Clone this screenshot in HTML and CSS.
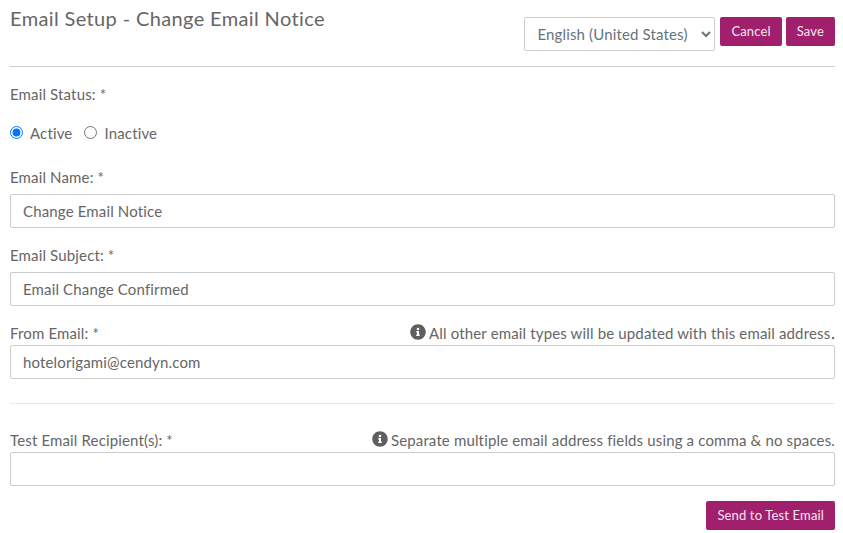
FILE: index.html
```html
<!DOCTYPE html>
<html lang="en">
<head>
  <meta charset="UTF-8" />
  <title>Email Setup</title>
  <link rel="stylesheet" href="styles.css">
</head>
<body>
  <div class="header">
    <h1>Email Setup - Change Email Notice</h1>
    <div class="actions">
      <select class="lang"><option>English (United States)</option></select>
      <button class="btn">Cancel</button>
      <button class="btn">Save</button>
    </div>
  </div>

  <div class="status">
    <label class="label">Email Status: *</label>
    <div class="radios">
      <input type="radio" name="status" id="active" checked>
      <label for="active">Active</label>
      <input type="radio" name="status" id="inactive">
      <label for="inactive">Inactive</label>
    </div>
  </div>

  <div class="field">
    <label class="label">Email Name: *</label>
    <input type="text" value="Change Email Notice">
  </div>

  <div class="field">
    <label class="label">Email Subject: *</label>
    <input type="text" value="Email Change Confirmed">
  </div>

  <div class="field from">
    <div class="label-row">
      <label class="label">From Email: *</label>
      <span class="hint">
        <svg viewBox="0 0 512 512"><path d="M256 8C119 8 8 119 8 256s111 248 248 248 248-111 248-248S393 8 256 8zm0 110a42 42 0 1 1 0 84 42 42 0 0 1 0-84zm56 254c0 7-5 12-12 12h-88c-7 0-12-5-12-12v-24c0-7 5-12 12-12h12v-64h-12c-7 0-12-5-12-12v-24c0-7 5-12 12-12h64c7 0 12 5 12 12v100h12c7 0 12 5 12 12v24z"/></svg>
        <span>All other email types will be updated with this email address<span class="dot">.</span></span>
      </span>
    </div>
    <input type="text" value="hotelorigami@cendyn.com">
  </div>

  <div class="divider"></div>

  <div class="field test">
    <div class="label-row">
      <label class="label">Test Email Recipient(s): *</label>
      <span class="hint">
        <svg viewBox="0 0 512 512"><path d="M256 8C119 8 8 119 8 256s111 248 248 248 248-111 248-248S393 8 256 8zm0 110a42 42 0 1 1 0 84 42 42 0 0 1 0-84zm56 254c0 7-5 12-12 12h-88c-7 0-12-5-12-12v-24c0-7 5-12 12-12h12v-64h-12c-7 0-12-5-12-12v-24c0-7 5-12 12-12h64c7 0 12 5 12 12v100h12c7 0 12 5 12 12v24z"/></svg>
        <span>Separate multiple email address fields using a comma &amp; no spaces.</span>
      </span>
    </div>
    <input type="text">
  </div>

  <div class="footer">
    <button class="btn">Send to Test Email</button>
  </div>
</body>
</html>
```

FILE: styles.css
```css
* {
  box-sizing: border-box;
}

body {
  font-family: Lato, "Noto Sans", sans-serif;
  font-size: 15px;
  letter-spacing: 0.15px;
  color: #666;
  background: #fff;
  margin: 0;
  padding: 0 8px 0 10px;
}

.header {
  display: flex;
  justify-content: space-between;
  height: 67px;
  border-bottom: 1px solid #ccc;
}

.header h1 {
  margin: 5px 0 0;
  font-size: 20px;
  line-height: 27px;
  font-weight: 400;
  letter-spacing: 0.37px;
}

.actions {
  display: flex;
  align-items: flex-start;
  gap: 4px;
  padding-top: 17px;
}

.lang {
  width: 191px;
  height: 34px;
  margin-right: 1px;
  padding: 0 8px;
  font-family: inherit;
  font-size: 15px;
  letter-spacing: 0.15px;
  color: #68737c;
  background: #fff;
  border: 1px solid #ccc;
  border-radius: 2px;
}

.btn {
  height: 29px;
  padding: 0 11px 2px;
  font-family: inherit;
  font-size: 13px;
  letter-spacing: 0.15px;
  color: #f3e6ef;
  background-color: #a0206d;
  border: none;
  border-radius: 2px;
  cursor: pointer;
}

.label {
  display: block;
  line-height: 20px;
}

.status {
  padding-top: 17px;
}

.radios {
  display: flex;
  align-items: center;
  height: 20px;
  margin-top: 19px;
}

.radios input {
  width: 13px;
  height: 13px;
  margin: 0 7px 2px 0;
}

.radios label {
  margin-right: 12px;
}

.field {
  margin-top: 17px;
}

.field .label {
  margin-bottom: 7px;
}

.field input {
  display: block;
  width: 100%;
  height: 34px;
  padding: 0 12px;
  font-family: inherit;
  font-size: 15px;
  letter-spacing: 0.15px;
  color: #666;
  background: #fff;
  border: 1px solid #ccc;
  border-radius: 2px;
}

.status + .field {
  margin-top: 24px;
}

.field.from {
  margin-top: 17px;
}

.field.test {
  margin-top: 26px;
}

.label-row {
  display: flex;
  justify-content: space-between;
  align-items: flex-start;
  height: 22px;
}

.label-row .label {
  margin-bottom: 0;
}

.hint {
  display: flex;
  align-items: center;
  gap: 3px;
  line-height: 20px;
  white-space: nowrap;
}

.hint svg {
  width: 16px;
  height: 16px;
  fill: #5f5f5f;
  margin-bottom: 3px;
}

.dot {
  color: #333;
  margin-left: 1px;
}

.divider {
  height: 1px;
  margin-top: 24px;
  background: #e8e8e8;
}

.footer {
  display: flex;
  justify-content: flex-end;
  margin-top: 15px;
}
```
